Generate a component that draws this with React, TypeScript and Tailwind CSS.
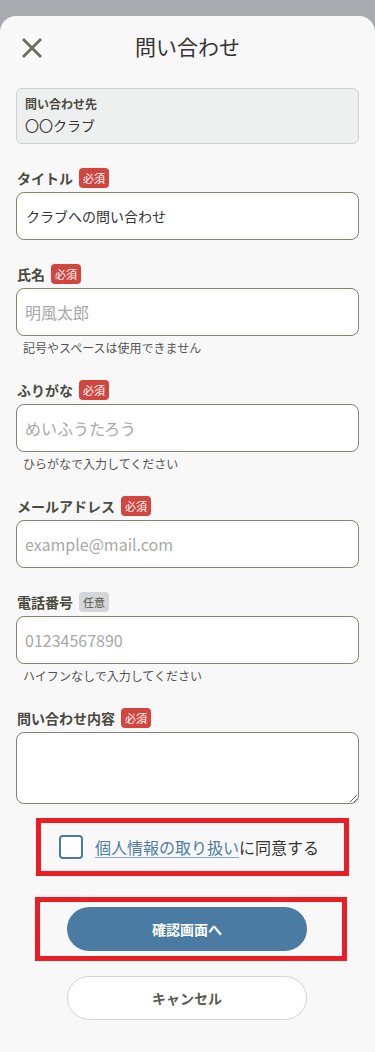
import React from "react";

const Req = () => (
  <span className="inline-flex h-5 items-center rounded-[4px] bg-[#d1463e] px-[4px] text-[11px] leading-none text-white">
    必須
  </span>
);
const Opt = () => (
  <span className="inline-flex h-5 items-center rounded-[4px] bg-[#d5d6d7] px-[4px] text-[11px] leading-none text-[#55554c]">
    任意
  </span>
);

function Label({ text, required = true }: { text: string; required?: boolean }) {
  return (
    <div className="mb-1 flex h-5 items-center gap-[6px] pl-[1px]">
      <span className="text-[14px] font-bold leading-5 text-[#4a4a40]">{text}</span>
      {required ? <Req /> : <Opt />}
    </div>
  );
}

function Input({ placeholder, value }: { placeholder?: string; value?: string }) {
  return (
    <div className="flex h-12 items-center rounded-lg border border-[#85826f] bg-white px-2">
      {value ? (
        <span className="pl-[1px] text-[14px] text-[#333]">{value}</span>
      ) : (
        <span className="text-[16px] text-[#a8a8a8]">{placeholder}</span>
      )}
    </div>
  );
}

function Help({ text }: { text: string }) {
  return <p className="mt-1 pl-[7px] text-[12px] leading-4 text-[#555550]">{text}</p>;
}

export default function App() {
  return (
    <div
      className="min-h-[1052px] w-[375px] bg-[#a9abb0] pt-4"
      style={{ fontFamily: '"Noto Sans CJK JP", "Noto Sans", sans-serif' }}
    >
      <div className="min-h-[1036px] rounded-t-2xl bg-[#f8f8f8] pb-8">
        <div className="grid h-[62px] grid-cols-[48px_1fr_48px] items-center">
          <div className="flex justify-center pl-[16px]">
            <svg width="24" height="24" viewBox="0 0 24 24" className="mt-[2px]">
              <path d="M4 4 L20 20 M20 4 L4 20" stroke="#6a6b5c" strokeWidth="2.8" strokeLinecap="square" />
            </svg>
          </div>
          <h1 className="text-center text-[21px] font-normal text-[#333]">問い合わせ</h1>
          <div />
        </div>

        <div className="mt-[10px] px-4">
          <div className="h-14 rounded-md border border-[#cfd1d1] bg-[#eef0f0] px-2 pt-[7px]">
            <p className="text-[12px] font-bold leading-4 text-[#4a4a40]">問い合わせ先</p>
            <p className="mt-[3px] text-[14px] leading-5 text-[#333]">〇〇クラブ</p>
          </div>

          <div className="mt-6 flex flex-col gap-6">
            <div>
              <Label text="タイトル" />
              <Input value="クラブへの問い合わせ" />
            </div>
            <div>
              <Label text="氏名" />
              <Input placeholder="明風太郎" />
              <Help text="記号やスペースは使用できません" />
            </div>
            <div>
              <Label text="ふりがな" />
              <Input placeholder="めいふうたろう" />
              <Help text="ひらがなで入力してください" />
            </div>
            <div>
              <Label text="メールアドレス" />
              <Input placeholder="example@mail.com" />
            </div>
            <div>
              <Label text="電話番号" required={false} />
              <Input placeholder="01234567890" />
              <Help text="ハイフンなしで入力してください" />
            </div>
            <div>
              <Label text="問い合わせ内容" />
              <textarea className="block h-[72px] w-full rounded-lg border border-[#85826f] bg-white outline-none" />
            </div>
          </div>
        </div>

        <div className="ml-[36px] mt-[14px] flex h-[58px] w-[313px] items-center border-[5px] border-[#ec1c24] pl-[18px]">
          <span className="h-6 w-6 shrink-0 rounded-[4px] border-2 border-[#4a7aa0] bg-white" />
          <span className="ml-3 text-[16px] leading-6 text-[#333]">
            <span className="text-[#4e7ea6] underline decoration-[#8aa8c2] underline-offset-[3px]">個人情報の取り扱い</span>
            に同意する
          </span>
        </div>

        <div className="ml-[35px] mt-[21px] flex h-16 w-[312px] items-center border-[5px] border-[#ec1c24] pl-[27px]">
          <button className="h-11 w-[240px] rounded-full bg-[#4a7ca3] text-[14px] font-bold text-white">
            確認画面へ
          </button>
        </div>

        <div className="ml-[67px] mt-[15px]">
          <button className="h-11 w-[240px] rounded-full border border-[#d3d3d3] bg-white text-[14px] font-bold text-[#5b5b4f]">
            キャンセル
          </button>
        </div>
      </div>
    </div>
  );
}
